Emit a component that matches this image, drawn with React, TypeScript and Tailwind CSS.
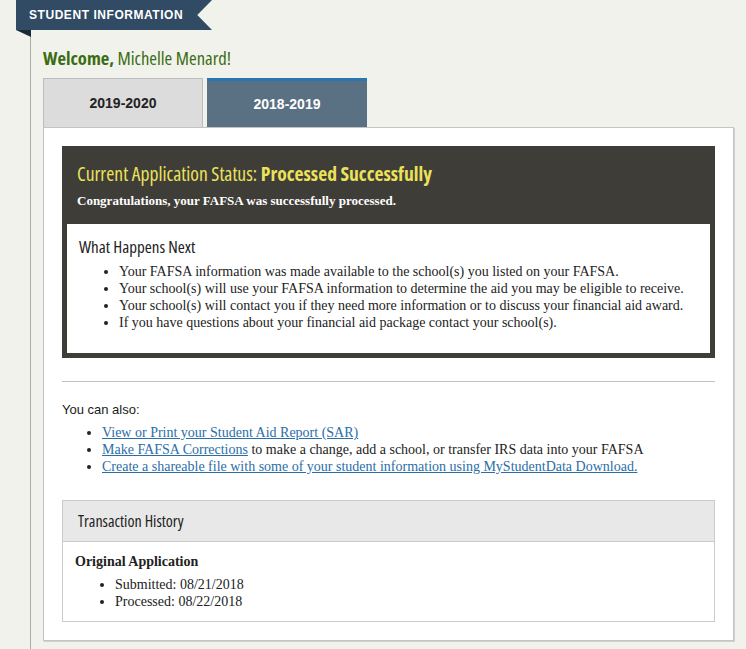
import { useState } from "react";

const narrow = "font-['Open_Sans',sans-serif] [font-stretch:75%]";
const serif = "font-['Liberation_Serif','DejaVu_Serif',serif]";
const sans = "font-['Liberation_Sans',Arial,sans-serif]";

const nextSteps = [
  "Your FAFSA information was made available to the school(s) you listed on your FAFSA.",
  "Your school(s) will use your FAFSA information to determine the aid you may be eligible to receive.",
  "Your school(s) will contact you if they need more information or to discuss your financial aid award.",
  "If you have questions about your financial aid package contact your school(s).",
];

const years = ["2019-2020", "2018-2019"];

export default function App() {
  const [year, setYear] = useState("2018-2019");

  return (
    <div className={`min-h-screen bg-[#f2f2ed] pr-3 ${sans}`}>
      {/* Ribbon header */}
      <div className="ml-4 flex h-[30px] w-[196px] items-center bg-[#304b63] pl-[13px] [clip-path:polygon(0_0,100%_0,92.5%_50%,100%_100%,0_100%)]">
        <span className="text-[12px] font-bold tracking-[0.55px] text-white">STUDENT INFORMATION</span>
      </div>

      <div className="relative ml-[30px] border-l border-[#ababab] pl-3 pt-4 pb-[9px]">
        {/* ribbon fold */}
        <div className="absolute -left-[15px] top-0 h-[7px] w-[15px] bg-[#1b2836] [clip-path:polygon(0_0,100%_0,100%_100%)]" />

        <h1 className={`text-[18.6px] leading-6 text-[#3a6d12] ${narrow}`}>
          <span className="font-bold">Welcome,</span> Michelle Menard!
        </h1>

        {/* Year tabs */}
        <div className="mt-2 flex gap-1">
          {years.map((y) =>
            y === year ? (
              <button
                key={y}
                onClick={() => setYear(y)}
                className="h-[49px] w-[160px] border-t-[3px] border-[#2b76b2] bg-[#5a7083] text-[14px] font-bold text-white"
              >
                {y}
              </button>
            ) : (
              <button
                key={y}
                onClick={() => setYear(y)}
                className="h-[49px] w-[160px] border border-b-0 border-[#bcbcbc] bg-[#dcdcdc] text-[14px] font-bold text-[#222]"
              >
                {y}
              </button>
            )
          )}
        </div>

        {/* Card */}
        <div className="border border-[#c4c4c4] bg-white px-[18px] pt-[18px] pb-[18px] shadow-[1px_1px_0_#d0d0d0]">
          <div className="bg-[#3f3d38]">
            <div className="px-[15px] pt-[16px] pb-[15px]">
              <h2 className={`text-[19.6px] leading-6 text-[#ebe25a] ${narrow}`}>
                Current Application Status: <span className="font-bold">Processed Successfully</span>
              </h2>
              <p className={`mt-[6px] text-[13px] font-bold leading-[17px] text-white ${serif}`}>
                Congratulations, your FAFSA was successfully processed.
              </p>
            </div>
            <div className="mx-[5px] pb-[5px]">
              <div className="bg-white px-3 pt-[13px] pb-[22px]">
                <h3 className={`text-[17px] leading-5 text-[#222] ${narrow}`}>What Happens Next</h3>
                <ul className={`mt-[6px] list-disc pl-10 text-[14px] leading-[17px] text-[#222] ${serif}`}>
                  {nextSteps.map((s) => (
                    <li key={s}>{s}</li>
                  ))}
                </ul>
              </div>
            </div>
          </div>

          <hr className="mt-[23px] border-[#c2c2c2]" />

          <p className="mt-[19px] text-[13px] leading-[17px] text-[#1a1a1a]">You can also:</p>
          <ul className={`mt-[6px] list-disc pl-10 text-[14px] leading-[17px] text-[#222] ${serif}`}>
            <li>
              <a href="#" className="text-[#2a6ea7] underline">View or Print your Student Aid Report (SAR)</a>
            </li>
            <li>
              <a href="#" className="text-[#2a6ea7] underline">Make FAFSA Corrections</a> to make a change, add a
              school, or transfer IRS data into your FAFSA
            </li>
            <li>
              <a href="#" className="text-[#2a6ea7] underline">
                Create a shareable file with some of your student information using MyStudentData Download.
              </a>
            </li>
          </ul>

          {/* Transaction history */}
          <div className="mt-[25px] border border-[#cbcbcb]">
            <div className={`flex h-[41px] items-center border-b border-[#cbcbcb] bg-[#e8e8e8] pl-[15px] text-[16px] text-[#222] ${narrow}`}>
              Transaction History
            </div>
            <div className={`px-3 pt-[11px] pb-[11px] text-[#222] ${serif}`}>
              <p className="text-[14px] font-bold leading-[18px]">Original Application</p>
              <ul className="mt-[5px] list-disc pl-10 text-[14px] leading-[17px]">
                <li>Submitted: 08/21/2018</li>
                <li>Processed: 08/22/2018</li>
              </ul>
            </div>
          </div>
        </div>
      </div>
    </div>
  );
}
